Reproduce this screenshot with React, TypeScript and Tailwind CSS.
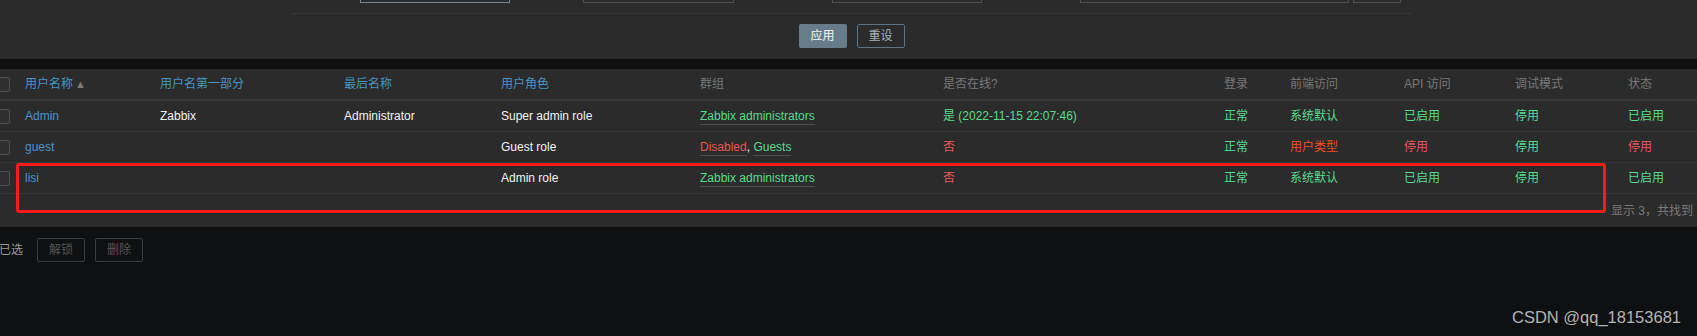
import React from 'react';

const FONT = { fontFamily: '"Liberation Sans", Arial, "Noto Sans CJK SC", sans-serif' };

const BLUE = 'text-[#4796c4]';
const GREEN = 'text-[#59db8f]';
const RED = 'text-[#e45959]';
const ORANGE = 'text-[#f24f1d]';
const WHITE = 'text-[#f2f2f2]';

// column widths, first one holds the checkbox
const COLS = ['w-[25px]', 'w-[135px]', 'w-[184px]', 'w-[157px]', 'w-[199px]', 'w-[243px]', 'w-[281px]', 'w-[66px]', 'w-[114px]', 'w-[111px]', 'w-[113px]', 'flex-1'];

type Cell = React.ReactNode;

function Checkbox() {
  return <div className="-ml-[5px] w-[15px] h-[15px] rounded-[2px] border border-[#4f4f4f] bg-[#2f2f2f]" />;
}

function GroupLink({ children, color }: { children: React.ReactNode; color: string }) {
  return <span className={`${color} border-b border-[#4b5056] pb-[1px]`}>{children}</span>;
}

function Row({ cells, header }: { cells: Cell[]; header?: boolean }) {
  return (
    <div
      className={`flex items-center ${
        header ? 'h-[32px] border-b-2 border-[#383838]' : 'h-[31px] border-b border-[#383838]'
      }`}
    >
      <div className={`${COLS[0]} shrink-0 flex items-center`}>
        <Checkbox />
      </div>
      {cells.map((c, i) => (
        <div key={i} className={`${COLS[i + 1]} shrink-0 whitespace-nowrap`}>
          {c}
        </div>
      ))}
    </div>
  );
}

const headerCells: Cell[] = [
  <span className={BLUE}>
    用户名称<span className="text-[#7a7a7a] text-[11px] ml-[2px]">▲</span>
  </span>,
  <span className={BLUE}>用户名第一部分</span>,
  <span className={BLUE}>最后名称</span>,
  <span className={BLUE}>用户角色</span>,
  <span className="text-[#787878]">群组</span>,
  <span className="text-[#787878]">是否在线?</span>,
  <span className="text-[#787878]">登录</span>,
  <span className="text-[#787878]">前端访问</span>,
  <span className="text-[#787878]">API 访问</span>,
  <span className="text-[#787878]">调试模式</span>,
  <span className="text-[#787878]">状态</span>,
];

const rows: Cell[][] = [
  [
    <span className={BLUE}>Admin</span>,
    <span className={WHITE}>Zabbix</span>,
    <span className={WHITE}>Administrator</span>,
    <span className={WHITE}>Super admin role</span>,
    <GroupLink color={GREEN}>Zabbix administrators</GroupLink>,
    <span className={GREEN}>是 (2022-11-15 22:07:46)</span>,
    <span className={GREEN}>正常</span>,
    <span className={GREEN}>系统默认</span>,
    <span className={GREEN}>已启用</span>,
    <span className={GREEN}>停用</span>,
    <span className={GREEN}>已启用</span>,
  ],
  [
    <span className={BLUE}>guest</span>,
    null,
    null,
    <span className={WHITE}>Guest role</span>,
    <span>
      <GroupLink color={RED}>Disabled</GroupLink>
      <span className={WHITE}>, </span>
      <GroupLink color={GREEN}>Guests</GroupLink>
    </span>,
    <span className={RED}>否</span>,
    <span className={GREEN}>正常</span>,
    <span className={ORANGE}>用户类型</span>,
    <span className={RED}>停用</span>,
    <span className={GREEN}>停用</span>,
    <span className={RED}>停用</span>,
  ],
  [
    <span className={BLUE}>lisi</span>,
    null,
    null,
    <span className={WHITE}>Admin role</span>,
    <GroupLink color={GREEN}>Zabbix administrators</GroupLink>,
    <span className={RED}>否</span>,
    <span className={GREEN}>正常</span>,
    <span className={GREEN}>系统默认</span>,
    <span className={GREEN}>已启用</span>,
    <span className={GREEN}>停用</span>,
    <span className={GREEN}>已启用</span>,
  ],
];

export default function App() {
  return (
    <div className="relative w-[1697px] h-[336px] overflow-hidden bg-[#0f1012] text-[12px] leading-[14px]" style={FONT}>
      {/* Filter panel (scrolled, only the bottom of the inputs shows) */}
      <div className="h-[59px] bg-[#2b2b2b]">
        <div className="h-[3px] overflow-hidden flex items-end">
          <div className="ml-[360px] w-[150px] h-[24px] shrink-0 border border-[#768896]" />
          <div className="ml-[73px] w-[151px] h-[24px] shrink-0 border border-[#4f4f4f]" />
          <div className="ml-[98px] w-[150px] h-[24px] shrink-0 border border-[#4f4f4f]" />
          <div className="ml-[98px] w-[269px] h-[24px] shrink-0 border border-[#4f4f4f]" />
          <div className="ml-[4px] w-[48px] h-[24px] shrink-0 border border-[#4f4f4f]" />
        </div>
        <div className="ml-[292px] w-[1119px] mt-[10px] h-px bg-[#383838]" />
        <div className="ml-[292px] w-[1119px] mt-[10px] flex justify-center gap-[10px]">
          <button className="w-[48px] h-[24px] rounded-[2px] bg-[#687d8b] text-[#f4f4f4]">应用</button>
          <button className="w-[48px] h-[24px] rounded-[2px] border border-[#5d7282] text-[#a9b3ba]">重设</button>
        </div>
      </div>

      {/* Users table */}
      <div className="mt-[10px] bg-[#2b2b2b]">
        <Row header cells={headerCells} />
        {rows.map((r, i) => (
          <Row key={i} cells={r} />
        ))}
        <div className="h-[33px] flex items-center pl-[1611px] pt-[1px] whitespace-nowrap text-[#787878]">
          显示 3，共找到
        </div>
      </div>

      {/* Mass actions */}
      <div className="mt-[11px] flex items-center h-[24px]">
        <span className="-ml-px text-[#9a9a9a]">已选</span>
        <button className="ml-[14px] w-[48px] h-[24px] rounded-[2px] border border-[#3d3d3d] text-[#555555]">解锁</button>
        <button className="ml-[10px] w-[48px] h-[24px] rounded-[2px] border border-[#3d3d3d] text-[#555555]">删除</button>
      </div>

      {/* Red annotation box */}
      <div className="absolute left-[16px] top-[163px] w-[1590px] h-[50px] border-[3px] border-[#ff1a1a] rounded-[3px] pointer-events-none" />

      {/* Watermark */}
      <div className="absolute right-[16px] top-[307px] text-[16.5px] leading-[20px] text-[#b4b4b4] whitespace-nowrap">
        CSDN @qq_18153681
      </div>
    </div>
  );
}
